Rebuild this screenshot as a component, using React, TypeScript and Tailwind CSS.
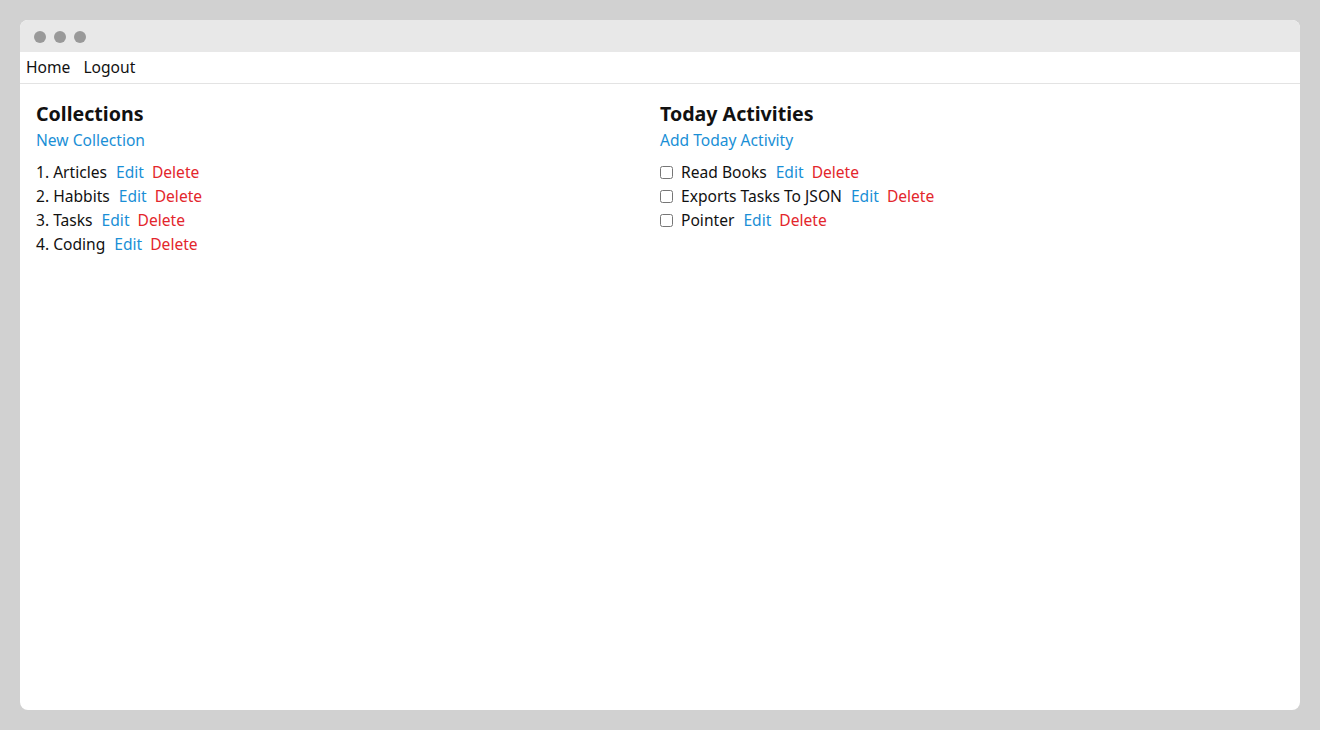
import React from "react";

const collections = ["Articles", "Habbits", "Tasks", "Coding"];
const activities = ["Read Books", "Exports Tasks To JSON", "Pointer"];

function Actions() {
    return (
        <>
            <a className="ml-[9px] text-[#1a8fd6] cursor-pointer">Edit</a>
            <a className="ml-2 text-[#e3262c] cursor-pointer">Delete</a>
        </>
    );
}

export default function App() {
    return (
        <div className="min-h-[730px] bg-[#d1d1d1] p-5 font-['Noto_Sans',sans-serif] text-[15.6px] text-[#111]">
            <div className="h-[690px] rounded-lg bg-white overflow-hidden flex flex-col">
                {/* title bar */}
                <div className="h-8 bg-[#e8e8e8] flex items-center gap-2 pl-[14px] pt-[2px]">
                    <span className="w-3 h-3 rounded-full bg-[#999]" />
                    <span className="w-3 h-3 rounded-full bg-[#999]" />
                    <span className="w-3 h-3 rounded-full bg-[#999]" />
                </div>

                <nav className="h-8 border-b border-[#e3e3e3] flex items-center gap-[13px] px-[6px]">
                    <a className="cursor-pointer">Home</a>
                    <a className="cursor-pointer">Logout</a>
                </nav>

                <main className="grid grid-cols-2 px-4 pt-[18px]">
                    <section>
                        <h1 className="text-[19.6px] font-bold leading-6">Collections</h1>
                        <a className="block mt-[2px] leading-6 text-[#1a8fd6] cursor-pointer">New Collection</a>
                        <ol className="mt-2">
                            {collections.map((c, i) => (
                                <li key={c} className="leading-6">
                                    {i + 1}. {c}
                                    <Actions />
                                </li>
                            ))}
                        </ol>
                    </section>

                    <section>
                        <h1 className="text-[19.6px] font-bold leading-6">Today Activities</h1>
                        <a className="block mt-[2px] leading-6 text-[#1a8fd6] cursor-pointer">Add Today Activity</a>
                        <ul className="mt-2">
                            {activities.map((a) => (
                                <li key={a} className="leading-6 flex items-center">
                                    <input type="checkbox" className="w-[13px] h-[13px] mr-2" />
                                    {a}
                                    <Actions />
                                </li>
                            ))}
                        </ul>
                    </section>
                </main>
            </div>
        </div>
    );
}
